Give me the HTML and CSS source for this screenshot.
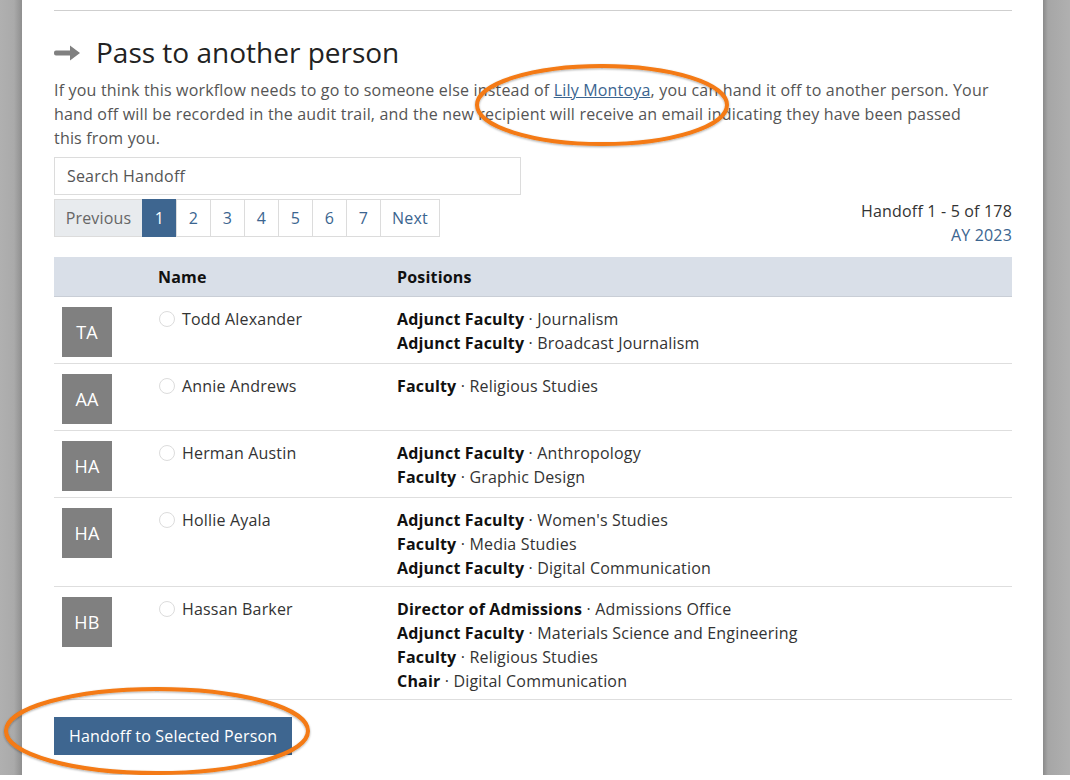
FILE: index.html
```html
<!DOCTYPE html>
<html lang="en">
<head>
<meta charset="utf-8">
<title>Pass to another person</title>
<link rel="stylesheet" href="styles.css">
</head>
<body>
<div class="frame">
  <div class="gutter gutter-left"></div>
  <main class="panel">
    <hr class="rule">
    <h2 class="title">
      <svg class="title-icon" width="27" height="18" viewBox="0 0 27 18" aria-hidden="true">
        <path d="M2 6.5h14V1.5l10 7.5-10 7.5v-5H2a2 2 0 0 1-2-2v-1a2 2 0 0 1 2-2z" fill="#808080"/>
      </svg>
      Pass to another person
    </h2>
    <p class="intro">If you think this workflow needs to go to someone else instead of <a href="#" class="link">Lily Montoya</a>, you can hand it off to another person. Your hand off will be recorded in the audit trail, and the new recipient will receive an email indicating they have been passed this from you.</p>

    <input class="search" type="text" placeholder="Search Handoff">

    <div class="toolbar">
      <nav class="pager">
        <span class="pg pg-prev">Previous</span>
        <span class="pg pg-num active">1</span>
        <span class="pg pg-num">2</span>
        <span class="pg pg-num">3</span>
        <span class="pg pg-num">4</span>
        <span class="pg pg-num">5</span>
        <span class="pg pg-num">6</span>
        <span class="pg pg-num">7</span>
        <span class="pg pg-next">Next</span>
      </nav>
      <div class="count">
        <div>Handoff 1 - 5 of 178</div>
        <div class="year">AY 2023</div>
      </div>
    </div>

    <div class="table">
      <div class="thead">
        <div></div>
        <div class="th">Name</div>
        <div class="th">Positions</div>
      </div>

      <div class="row">
        <div class="avatar">TA</div>
        <label class="person"><span class="radio"></span>Todd Alexander</label>
        <div class="positions">
          <div><b>Adjunct Faculty</b> · Journalism</div>
          <div><b>Adjunct Faculty</b> · Broadcast Journalism</div>
        </div>
      </div>

      <div class="row">
        <div class="avatar">AA</div>
        <label class="person"><span class="radio"></span>Annie Andrews</label>
        <div class="positions">
          <div><b>Faculty</b> · Religious Studies</div>
        </div>
      </div>

      <div class="row">
        <div class="avatar">HA</div>
        <label class="person"><span class="radio"></span>Herman Austin</label>
        <div class="positions">
          <div><b>Adjunct Faculty</b> · Anthropology</div>
          <div><b>Faculty</b> · Graphic Design</div>
        </div>
      </div>

      <div class="row">
        <div class="avatar">HA</div>
        <label class="person"><span class="radio"></span>Hollie Ayala</label>
        <div class="positions">
          <div><b>Adjunct Faculty</b> · Women's Studies</div>
          <div><b>Faculty</b> · Media Studies</div>
          <div><b>Adjunct Faculty</b> · Digital Communication</div>
        </div>
      </div>

      <div class="row">
        <div class="avatar">HB</div>
        <label class="person"><span class="radio"></span>Hassan Barker</label>
        <div class="positions">
          <div><b>Director of Admissions</b> · Admissions Office</div>
          <div><b>Adjunct Faculty</b> · Materials Science and Engineering</div>
          <div><b>Faculty</b> · Religious Studies</div>
          <div><b>Chair</b> · Digital Communication</div>
        </div>
      </div>
    </div>

    <button class="btn" type="button">Handoff to Selected Person</button>
  </main>
  <div class="gutter gutter-right"></div>

  <svg class="marks" width="1070" height="780" viewBox="0 0 1070 780" aria-hidden="true">
    <defs>
      <filter id="sh" x="-10%" y="-30%" width="120%" height="160%">
        <feDropShadow dx="0" dy="1" stdDeviation="1" flood-color="#000" flood-opacity="0.35"/>
      </filter>
    </defs>
    <ellipse cx="602" cy="105" rx="125" ry="39" fill="none" stroke="#f47a12" stroke-width="4" filter="url(#sh)"/>
    <ellipse cx="157" cy="731" rx="151" ry="42" fill="none" stroke="#f47a12" stroke-width="4" filter="url(#sh)"/>
  </svg>
</div>
</body>
</html>
```

FILE: styles.css
```css
* { box-sizing: border-box; }

html, body {
  margin: 0;
  padding: 0;
  background: #fff;
}

body {
  font-family: "Open Sans", "DejaVu Sans", sans-serif;
  color: #333;
  font-size: 16px;
  letter-spacing: 0.18px;
}

.frame {
  position: relative;
  display: flex;
  height: 775px;
  overflow: hidden;
  background: #acacac;
}

.gutter {
  flex: none;
  height: 100%;
}

.gutter-left {
  width: 22px;
  background: linear-gradient(to right, #b0b0b0 0, #aaaaaa 14px, #8f8f8f 22px);
}

.gutter-right {
  width: 27px;
  background: linear-gradient(to right, #8a8a8a 0, #a6a6a6 5px, #b0b0b0 27px);
}

.panel {
  flex: 1;
  background: #fff;
  padding: 0 31px 0 32px;
}

.rule {
  margin: 10px 0 0;
  border: 0;
  border-top: 1px solid #cfcfcf;
  height: 0;
}

.title {
  display: flex;
  align-items: center;
  gap: 15px;
  margin: 25px 0 0;
  height: 32px;
  font-weight: 400;
  font-size: 28px;
  color: #222;
  letter-spacing: 0;
}

.title-icon {
  flex: none;
  margin-top: 1px;
}

.intro {
  margin: 10px 0 0;
  max-width: 937px;
  line-height: 24px;
  color: #555;
}

.link {
  color: #3b6590;
  text-decoration: underline;
}

.search {
  display: block;
  margin-top: 7px;
  width: 467px;
  height: 38px;
  padding: 0 12px;
  border: 1px solid #dcdcdc;
  font: inherit;
  letter-spacing: inherit;
  color: #555;
  outline: none;
}

.search::placeholder {
  color: #555;
}

.toolbar {
  display: flex;
  justify-content: space-between;
  margin-top: 4px;
}

.pager {
  display: flex;
  height: 38px;
}

.pg {
  display: flex;
  align-items: center;
  justify-content: center;
  border: 1px solid #dcdcdc;
  margin-left: -1px;
  color: #3b6590;
}

.pg-prev {
  margin-left: 0;
  width: 89px;
  background: #e8ebee;
  color: #666;
}

.pg-num {
  width: 35px;
}

.pg-num.active {
  background: #3e6690;
  border-color: #3e6690;
  color: #fff;
}

.pg-next {
  width: 60px;
}

.count {
  text-align: right;
  line-height: 24px;
  color: #333;
}

.year {
  color: #3b6590;
}

.table {
  margin-top: 10px;
}

.thead,
.row {
  display: grid;
  grid-template-columns: 104px 239px 1fr;
}

.thead {
  height: 40px;
  align-items: center;
  background: #d9dfe8;
  border-bottom: 1px solid #c9ced6;
}

.th {
  font-weight: 700;
  color: #111;
}

.row {
  padding: 10px 0 6px;
  border-bottom: 1px solid #dedede;
}

.avatar {
  margin-left: 8px;
  width: 50px;
  height: 50px;
  background: #808080;
  color: #fff;
  font-size: 18px;
  display: flex;
  align-items: center;
  justify-content: center;
}

.person {
  display: flex;
  align-items: center;
  height: 24px;
  color: #333;
}

.radio {
  width: 16px;
  height: 16px;
  margin: 0 7px 0 1px;
  border: 1px solid #dcdcdc;
  border-radius: 50%;
  background: #fff;
}

.positions {
  line-height: 24px;
  color: #333;
}

.positions b {
  color: #111;
  font-weight: 700;
}

.btn {
  display: block;
  margin-top: 17px;
  height: 38px;
  padding: 0 15px;
  border: 0;
  background: #3e6690;
  color: #fff;
  font: inherit;
  letter-spacing: inherit;
}

.marks {
  position: absolute;
  left: 0;
  top: 0;
  pointer-events: none;
}
```
